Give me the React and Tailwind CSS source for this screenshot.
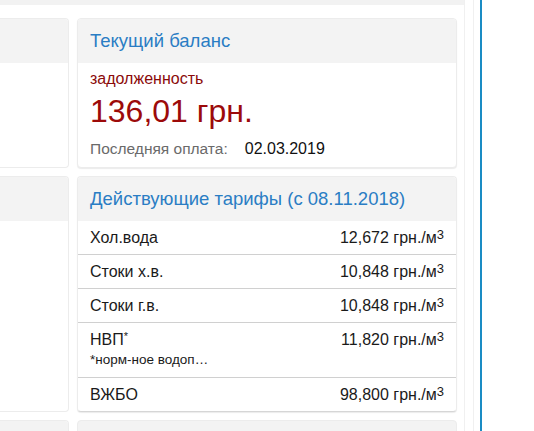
const TARIFFS = [
  { name: 'Хол.вода', value: '12,672' },
  { name: 'Стоки х.в.', value: '10,848' },
  { name: 'Стоки г.в.', value: '10,848' },
  { name: 'НВП', star: true, note: '*норм-ное водоп…', value: '11,820' },
  { name: 'ВЖБО', value: '98,800' },
];

function Card({ title, children, className = '' }) {
  return (
    <div className={`rounded-[4px] border border-[#ececec] bg-white shadow-[0_1px_1px_rgba(0,0,0,0.08)] overflow-hidden ${className}`}>
      <div className="h-[44px] bg-[#f3f3f3] px-3 flex items-center text-[18.5px] text-[#2a7dc4]">
        {title}
      </div>
      {children}
    </div>
  );
}

function StubCard({ className = '' }) {
  return (
    <div className={`rounded-r-[4px] border border-l-0 border-[#ececec] bg-white overflow-hidden ${className}`}>
      <div className="h-[44px] bg-[#f3f3f3]" />
    </div>
  );
}

export default function App() {
  return (
    <div className="w-[534px] h-[431px] overflow-hidden bg-white flex font-['Liberation_Sans',Arial,sans-serif]">
      <div className="w-[465px] shrink-0 border-r border-[#f0f0f0]">
        <div className="h-[5px] bg-[#f2f2f2]" />
        <div className="pt-[13px] pr-2 grid grid-cols-[69px_380px] gap-x-2 gap-y-2">
          <StubCard className="h-[150px]" />
          <Card title="Текущий баланс" className="h-[150px]">
            <div className="px-3 pt-[6px]">
              <div className="text-[16px] leading-[20px] text-[#8b0a0a]">задолженность</div>
              <div className="text-[32px] leading-[44px] text-[#9c0a0a]">136,01 грн.</div>
              <div className="mt-[6px] text-[15.5px] leading-[20px] flex">
                <span className="text-[#6a6a6a]">Последняя оплата:</span>
                <span className="ml-[17px] text-[16px] text-[#111]">02.03.2019</span>
              </div>
            </div>
          </Card>

          <StubCard className="h-[236px]" />
          <Card title="Действующие тарифы (с 08.11.2018)" className="h-[236px] border-b-[#d6d6d6]">
            <div>
              {TARIFFS.map((t, i) => (
                <div
                  key={i}
                  className={`flex justify-between px-3 pt-[8px] ${t.note ? 'pb-[8px]' : 'pb-[7px]'} ${i < TARIFFS.length - 1 ? 'border-b border-[#d0d0d0]' : ''}`}
                >
                  <div className="text-[16px] leading-[18px] text-[#1a1a1a]">
                    <div>
                      {t.name}
                      <sup className={`text-[11px] relative -top-[5px] ${t.star ? '' : 'hidden'}`}>*</sup>
                    </div>
                    {t.note && <div className="text-[13.5px] leading-[19px] mt-[1px]">{t.note}</div>}
                  </div>
                  <div className="text-[16px] leading-[18px] text-[#1a1a1a] whitespace-nowrap">
                    {t.value} грн./м<sup className="text-[13px] relative -top-[4px]">3</sup>
                  </div>
                </div>
              ))}
            </div>
          </Card>

          <StubCard className="h-[40px]" />
          <div className="h-[40px] rounded-t-[4px] bg-[#f3f3f3] border border-[#ececec]" />
        </div>
      </div>
      <div className="w-[8px] shrink-0" />
      <div className="w-px shrink-0 bg-[#f0f0f0]" />
      <div className="w-[6px] shrink-0" />
      <div className="w-[2px] shrink-0 bg-[#1a8cc4]" />
      <div className="flex-1" />
    </div>
  );
}
